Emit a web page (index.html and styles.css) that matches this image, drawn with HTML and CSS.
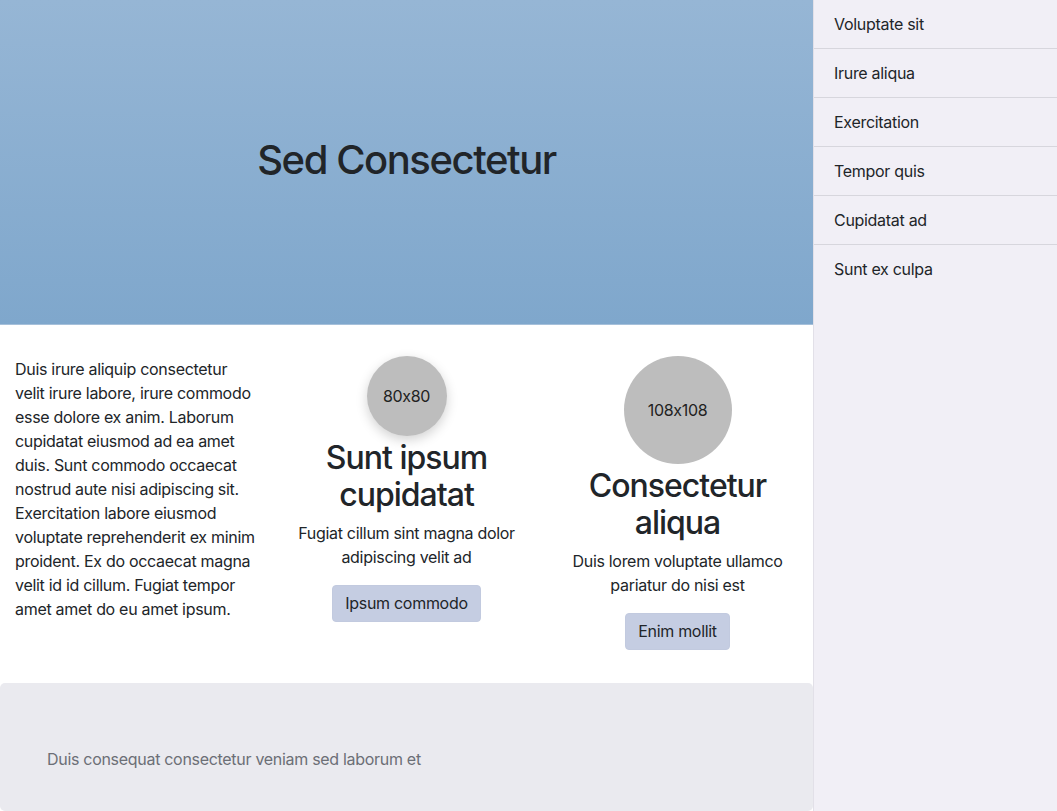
FILE: index.html
```html
<!DOCTYPE html>
<html>
<head>
<meta charset="utf-8">
<link rel="stylesheet" href="styles.css">
</head>
<body>
<div class="page">
  <main class="main">
    <header class="hero"><h1>Sed Consectetur</h1></header>
    <section class="cols">
      <div class="col">
        <p class="lead">Duis irure aliquip consectetur velit irure labore, irure commodo esse dolore ex anim. Laborum cupidatat eiusmod ad ea amet duis. Sunt commodo occaecat nostrud aute nisi adipiscing sit. Exercitation labore eiusmod voluptate reprehenderit ex minim proident. Ex do occaecat magna velit id id cillum. Fugiat tempor amet amet do eu amet ipsum.</p>
      </div>
      <div class="col center">
        <div class="avatar small">80x80</div>
        <h2>Sunt ipsum cupidatat</h2>
        <p class="desc">Fugiat cillum sint magna dolor adipiscing velit ad</p>
        <button class="btn">Ipsum commodo</button>
      </div>
      <div class="col center">
        <div class="avatar large">108x108</div>
        <h2>Consectetur aliqua</h2>
        <p class="desc">Duis lorem voluptate ullamco pariatur do nisi est</p>
        <button class="btn">Enim mollit</button>
      </div>
    </section>
    <footer class="foot">Duis consequat consectetur veniam sed laborum et</footer>
  </main>
  <aside class="side">
    <ul class="menu">
      <li>Voluptate sit</li>
      <li>Irure aliqua</li>
      <li>Exercitation</li>
      <li>Tempor quis</li>
      <li>Cupidatat ad</li>
      <li class="last">Sunt ex culpa</li>
    </ul>
  </aside>
</div>
</body>
</html>
```
FILE: styles.css
```css
* { box-sizing: border-box; }
html, body { margin: 0; padding: 0; }
body {
  font-family: Inter, "Noto Sans", "Liberation Sans", sans-serif;
  font-size: 16px;
  line-height: 24px;
  letter-spacing: -0.3px;
  font-feature-settings: "calt" 0;
  color: #212529;
  background: #fff;
}
.page {
  display: flex;
  width: 1057px;
  height: 811px;
  overflow: hidden;
}
.main {
  width: 813px;
  flex-shrink: 0;
  display: flex;
  flex-direction: column;
}
.hero {
  flex-shrink: 0;
  height: 325px;
  background: linear-gradient(#96b6d5, #7fa7cc);
  border-bottom: 1px solid #a6c0da;
  display: flex;
  align-items: center;
  justify-content: center;
}
.hero h1 {
  margin: 0 0 4px 0;
  font-size: 40px;
  font-weight: 500;
  line-height: 48px;
  letter-spacing: -1.45px;
}
.cols {
  flex-shrink: 0;
  display: grid;
  grid-template-columns: 1fr 1fr 1fr;
  padding: 31px 0 33px;
}
.col {
  padding: 0 15px;
}
.col.center {
  display: flex;
  flex-direction: column;
  align-items: center;
  text-align: center;
}
.lead {
  margin: 1px 0 0;
}
.avatar {
  border-radius: 50%;
  background: #bdbdbd;
  display: flex;
  align-items: center;
  justify-content: center;
  font-size: 16px;
  color: #222;
  margin-bottom: 3px;
}
.avatar.small {
  width: 80px;
  height: 80px;
  box-shadow: 0 4px 12px rgba(0,0,0,0.18);
}
.avatar.large {
  width: 108px;
  height: 108px;
}
h2 {
  margin: 0 0 8px;
  font-size: 32px;
  font-weight: 500;
  line-height: 37px;
  letter-spacing: -1px;
}
.desc {
  margin: 0 0 16px;
  padding: 0 8px;
}
.btn {
  font: inherit;
  letter-spacing: inherit;
  color: #212529;
  background: #c5cde2;
  border: 1px solid #c2cadf;
  border-radius: 4px;
  padding: 6px 12px;
  line-height: 23px;
}
.foot {
  flex: 1;
  background: #eaeaef;
  border-radius: 5px;
  padding: 64px 47px 40px;
  color: #6c6f76;
}
.side {
  width: 244px;
  background: #f1eff6;
  border-left: 1px solid #e2e0e8;
}
.menu {
  list-style: none;
  margin: 0;
  padding: 0;
}
.menu li {
  padding: 12px 20px;
  border-bottom: 1px solid #d7d6dd;
  line-height: 24px;
}
.menu li.last { border-bottom: none; }
```
